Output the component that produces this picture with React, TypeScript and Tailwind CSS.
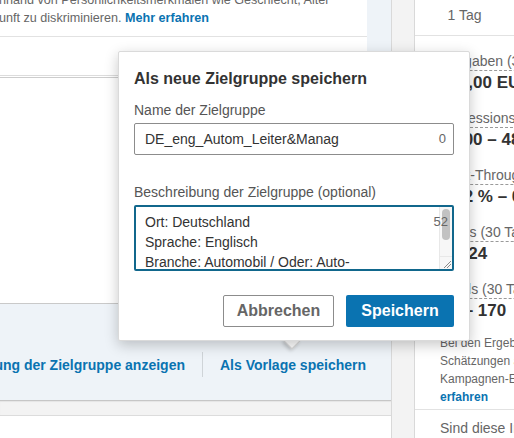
const font = "font-['Liberation_Sans',Arial,sans-serif]"

function Metric({ label, value }: { label: string; value: string }) {
  return (
    <div className="mb-[16px] flex flex-col items-start whitespace-nowrap">
      <div className="border-b border-dashed border-[#9a9a9a] text-[14px] leading-[17px] text-[#666]">{label}</div>
      <div className="mt-[1px] text-[17px] font-bold leading-[22px] text-[#333]">{value}</div>
    </div>
  )
}

function SaveAudiencePopover() {
  return (
    <div className="absolute left-[118px] top-[51px] w-[352px]">
      {/* Pfeil nach unten */}
      <div className="absolute bottom-[-6px] left-[168px] h-[12px] w-[12px] rotate-45 border border-[#d6d6d6] bg-white shadow-[0_2px_4px_rgba(0,0,0,0.2)]" />
      <div className="relative z-10 rounded-[2px] border border-[#dadada] bg-white px-[15px] pb-[13px] pt-[15px] shadow-[0_4px_14px_rgba(0,0,0,0.22)]">
        <h3 className="text-[16px] font-bold leading-[24px] text-[#333]">Als neue Zielgruppe speichern</h3>

        <div className="mt-[9px] text-[14px] leading-[20px] text-[#555]">Name der Zielgruppe</div>
        <div className="relative mt-[3px] flex h-[32px] items-center rounded-[2px] border border-[#8c8c8c] pl-[10px]">
          <span className="text-[14px] text-[#333]">DE_eng_Autom_Leiter&amp;Manag</span>
          <span className="absolute right-[7px] text-[13px] text-[#666]">0</span>
        </div>

        <div className="mt-[27px] text-[14px] leading-[20px] text-[#555]">Beschreibung der Zielgruppe (optional)</div>
        <div className="relative mt-[3px] h-[66px] overflow-hidden rounded-[2px] border-2 border-[#11678c] pl-[9px] pt-[5px]">
          <div className="text-[14px] leading-[20px] text-[#333]">
            <div>Ort: Deutschland</div>
            <div>Sprache: Englisch</div>
            <div>Branche: Automobil / Oder: Auto-</div>
          </div>
          {/* Scrollleiste */}
          <div className="absolute right-0 top-0 h-full w-[13px] border-l border-[#e8e8e8] bg-[#f7f7f7]">
            <div className="mx-auto mt-[2px] h-[31px] w-[8px] rounded-full bg-[#c2c2c2]" />
            <div className="absolute bottom-0 left-0 h-[13px] w-full border-t border-[#e8e8e8] bg-[#f7f7f7]">
              <svg viewBox="0 0 12 12" className="h-full w-full">
                <path d="M4 11 L11 4 M7 11 L11 7" stroke="#8a8a8a" strokeWidth="1" />
              </svg>
            </div>
          </div>
          <span className="absolute right-[4px] top-[7px] text-[13px] leading-[16px] text-[#666]">52</span>
        </div>

        <div className="mt-[24px] flex justify-end gap-[12px]">
          <button className="h-[32px] w-[111px] rounded-[2px] border border-[#8c8c8c] bg-white text-[16px] font-bold text-[#666]">
            Abbrechen
          </button>
          <button className="h-[32px] w-[108px] rounded-[2px] bg-[#0a73b1] text-[16px] font-bold text-white">
            Speichern
          </button>
        </div>
      </div>
    </div>
  )
}

export default function App() {
  return (
    <div className={`relative h-[438px] w-[514px] overflow-hidden bg-[#f3f3f3] ${font}`}>
      <div className="flex h-full">
        {/* linke Spalte */}
        <div className="flex w-[392px] shrink-0 flex-col border-r border-[#d9d9d9] bg-[#eef3f8]">
          <div className="flex h-[75px]">
            <div className="flex w-[367px] flex-col bg-white">
              <div className="h-[37px] overflow-hidden border-b border-[#e2e2e2] text-[12.6px] leading-[18px] text-[#666]">
                <div className="-mt-[9px] -ml-[8px] whitespace-nowrap">anhand von Persönlichkeitsmerkmalen wie Geschlecht, Alter</div>
                <div className="-ml-[1px] whitespace-nowrap">
                  unft zu diskriminieren. <span className="font-bold text-[#0a73b1]">Mehr erfahren</span>
                </div>
              </div>
              <div className="flex-1" />
            </div>
            <div className="flex-1" />
          </div>
          <div className="h-[228px] border-t border-[#dcdcdc] bg-white">
            <div className="mt-[1px] h-px bg-[#cdcdcd]" />
          </div>
          <div className="flex h-[97px] items-start justify-end gap-[17px] overflow-hidden border-t border-[#c9c9c9] pr-[25px] pt-[51px] text-[14px] font-bold leading-[20px] text-[#0a73b1]">
            <span className="whitespace-nowrap">Zusammenfassung der Zielgruppe anzeigen</span>
            <span className="mt-[-3px] h-[25px] w-px shrink-0 bg-[#cfd4d8]" />
            <span className="whitespace-nowrap">Als Vorlage speichern</span>
          </div>
          <div className="h-[15px] border-t border-[#c6c6c6] bg-[#f3f3f3] shadow-[inset_0_1px_1px_rgba(0,0,0,0.06)]" />
          <div className="flex-1 border-t border-[#dcdcdc] bg-white" />
        </div>

        <div className="w-[22px] shrink-0" />

        {/* Prognose-Spalte */}
        <div className="min-w-0 flex-1 overflow-hidden border-l border-[#d9d9d9] bg-white">
          <div className="flex h-[36px] items-center justify-center border-b border-[#e2e2e2] pb-[4px] text-[14px] text-[#666]">
            1 Tag
          </div>
          <div className="pl-[25px] pt-[17px]">
            <Metric label="Ausgaben (30 Tage)" value="350,00 EUR" />
            <Metric label="Impressions (30 Tage)" value="1.000 – 48.000" />
            <Metric label="Click-Through-Rate (30 Tage)" value="0,42 % – 0,9 %" />
            <Metric label="Klicks (30 Tage)" value="8 – 24" />
            <Metric label="Leads (30 Tage)" value="48 – 170" />
            <div className="-mt-[16px] whitespace-nowrap pt-[12px] text-[12px] leading-[18px] text-[#666]">
              <div>Bei den Ergebnissen handelt es sich um</div>
              <div>Schätzungen auf Basis ähnlicher</div>
              <div>Kampagnen-Einstellungen. Mehr</div>
              <div className="font-bold text-[#0a73b1]">erfahren</div>
            </div>
          </div>
          <div className="mt-[3px] border-t border-[#e2e2e2] pl-[25px] pt-[9px] text-[14px] leading-[18px] text-[#666]">
            <span className="whitespace-nowrap">Sind diese Informationen hilfreich?</span>
          </div>
        </div>
      </div>

      <SaveAudiencePopover />
    </div>
  )
}
